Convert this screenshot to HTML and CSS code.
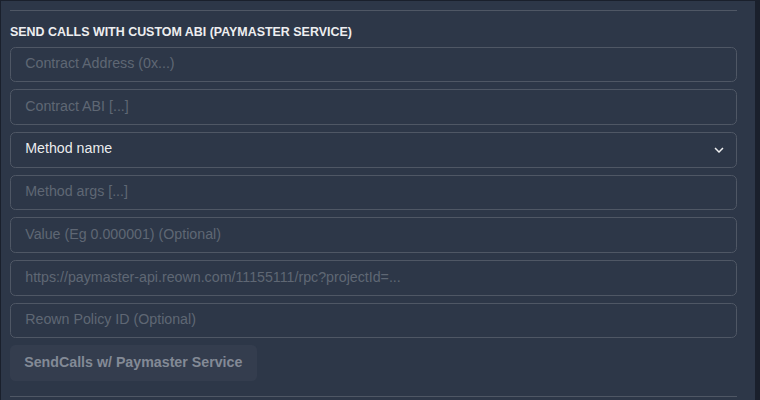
FILE: index.html
```html
<!DOCTYPE html>
<html>
<head>
<meta charset="utf-8">
<link rel="stylesheet" href="styles.css">
</head>
<body>
<div class="panel">
  <div class="divider"></div>
  <h2 class="title">Send Calls with custom ABI (Paymaster Service)</h2>
  <div class="stack">
    <input class="field" type="text" placeholder="Contract Address (0x...)">
    <input class="field" type="text" placeholder="Contract ABI [...]">
    <div class="select">
      <span class="select-value">Method name</span>
      <svg class="chevron" viewBox="0 0 24 24" width="18" height="18"><path fill="currentColor" d="M16.59 8.59L12 13.17 7.41 8.59 6 10l6 6 6-6z"/></svg>
    </div>
    <input class="field" type="text" placeholder="Method args [...]">
    <input class="field" type="text" placeholder="Value (Eg 0.000001) (Optional)">
    <input class="field" type="text" placeholder="https://paymaster-api.reown.com/11155111/rpc?projectId=...">
    <input class="field" type="text" placeholder="Reown Policy ID (Optional)">
    <div class="actions">
      <button class="btn" disabled>SendCalls w/ Paymaster Service</button>
    </div>
  </div>
  <div class="divider bottom"></div>
</div>
</body>
</html>
```
FILE: styles.css
```css
html, body {
  margin: 0;
  padding: 0;
  background: #1a202c;
  overflow: hidden;
}
body {
  font-family: "Liberation Sans", Arial, sans-serif;
  padding: 1px 0 0 1px;
  height: 400px;
  box-sizing: border-box;
}
.panel {
  height: 399px;
  width: 754px;
  background: #2d3748;
  padding: 9px 18px 0 9px;
  box-sizing: border-box;
  overflow: hidden;
}
.divider {
  height: 1px;
  background: #4f5765;
}
.divider.bottom {
  margin-top: 15px;
}
.title {
  margin: 12.6px 0 0 0;
  font-size: 12.44px;
  line-height: 16px;
  font-weight: 700;
  text-transform: uppercase;
  color: #edeef0;
}
.stack {
  display: flex;
  flex-direction: column;
  gap: 7.11px;
  margin-top: 7.11px;
}
.field, .select {
  box-sizing: border-box;
  width: 100%;
  height: 35.56px;
  border: 1px solid #4f5765;
  border-radius: 5.33px;
  background: transparent;
  padding: 0 14.22px 2px 14.22px;
  font-family: "Liberation Sans", Arial, sans-serif;
  font-size: 14.22px;
  color: rgba(255, 255, 255, 0.92);
  outline: none;
  margin: 0;
}
.field::placeholder {
  color: #5f6774;
  opacity: 1;
}
.select {
  display: flex;
  align-items: center;
  justify-content: space-between;
  padding-right: 8px;
  padding-bottom: 3px;
}
.select-value {
  color: rgba(255, 255, 255, 0.92);
}
.chevron {
  color: rgba(255, 255, 255, 0.92);
  display: block;
  margin-top: 4px;
}
.actions {
  display: flex;
}
.btn {
  height: 35.56px;
  padding: 0 14.22px 2px 14.22px;
  border: none;
  border-radius: 5.33px;
  background: #343d4e;
  color: #838a96;
  font-family: "Liberation Sans", Arial, sans-serif;
  font-size: 14.22px;
  font-weight: 700;
  cursor: not-allowed;
}
```
